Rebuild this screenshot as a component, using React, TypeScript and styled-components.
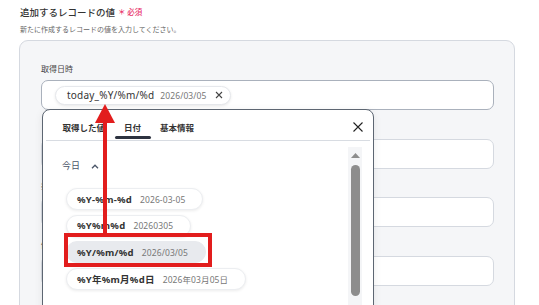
import styled, { createGlobalStyle } from "styled-components";

const GlobalStyle = createGlobalStyle`
  html, body {
    margin: 0;
    padding: 0;
    background: #ffffff;
    overflow: hidden;
  }
  body {
    font-family: "Noto Sans", "Noto Sans CJK JP", sans-serif;
    color: #333;
  }
`;

const Page = styled.div`
  position: relative;
  width: 539px;
  height: 305px;
  box-sizing: border-box;
  padding: 5px 24px 0 19px;
  overflow: hidden;
`;

const Title = styled.div`
  margin-left: 1px;
  display: flex;
  align-items: center;
  gap: 3px;
  font-family: "Noto Sans CJK JP", sans-serif;
  font-size: 9.5px;
  line-height: 14px;
  font-weight: 500;
  color: #333;
`;

const Required = styled.span`
  color: #e8336b;
  font-size: 7.5px;
  font-weight: 500;
`;

const Hint = styled.div`
  margin: 5px 0 6px 1px;
  font-family: "Noto Sans CJK JP", sans-serif;
  font-size: 7px;
  line-height: 10px;
  color: #666;
`;

const Panel = styled.div`
  width: 496px;
  box-sizing: border-box;
  height: 300px;
  padding: 22px 20px 0 21px;
  background: #f5f6f8;
  border: 1px solid #d5d9e0;
  border-radius: 9px;
  display: flex;
  flex-direction: column;
  gap: 11.5px;
`;

const Field = styled.div`
  display: flex;
  flex-direction: column;
  gap: 5px;
`;

const Label = styled.div`
  font-family: "Noto Sans CJK JP", sans-serif;
  font-size: 8px;
  line-height: 12px;
  color: #444;
`;

const InputBox = styled.div<{ $focused?: boolean }>`
  position: relative;
  height: 30px;
  box-sizing: border-box;
  background: #fff;
  border: 1px solid ${({ $focused }) => ($focused ? "#aab1bc" : "#d5d9e0")};
  border-radius: 7px;
  display: flex;
  align-items: center;
  padding-left: 13px;
  z-index: ${({ $focused }) => ($focused ? 2 : 1)};
`;

const Tag = styled.div`
  height: 19px;
  box-sizing: border-box;
  display: flex;
  align-items: center;
  gap: 6px;
  padding: 0 7px 0 11px;
  background: #fff;
  border: 1px solid #e6e8ec;
  border-radius: 10px;
  box-shadow: 0 1px 3px rgba(0, 0, 0, 0.09);
`;

const TagText = styled.span`
  font-size: 10px;
  letter-spacing: 0.2px;
  color: #333;
`;

const SubText = styled.span`
  font-size: 8.5px;
  letter-spacing: 0.1px;
  color: #777;
  font-family: "Noto Sans", "Noto Sans CJK JP", sans-serif;
`;

const Dropdown = styled.div`
  position: absolute;
  top: 100%;
  left: 0;
  width: 332px;
  height: 210px;
  box-sizing: border-box;
  background: #fff;
  border: 1px solid #5d6672;
  border-radius: 8px 8px 0 0;
  box-shadow: 0 2px 8px rgba(0, 0, 0, 0.08);
  display: flex;
  flex-direction: column;
`;

const TabBar = styled.div`
  height: 30px;
  margin: 0 3px;
  padding-left: 7px;
  border-bottom: 1px solid #d8dce2;
  display: flex;
  align-items: stretch;
`;

const Tab = styled.div<{ $active?: boolean }>`
  position: relative;
  display: flex;
  align-items: center;
  padding: 3px 9.5px 0;
  font-family: "Noto Sans CJK JP", sans-serif;
  font-size: 8.5px;
  font-weight: 700;
  color: #333;
  &::after {
    content: "";
    display: ${({ $active }) => ($active ? "block" : "none")};
    position: absolute;
    left: 0;
    right: 0;
    bottom: 1px;
    height: 3px;
    border-radius: 2px;
    background: #2d3340;
  }
`;

const CloseButton = styled.div`
  margin-left: auto;
  margin-right: 7px;
  padding-top: 3px;
  display: flex;
  align-items: center;
`;

const Body = styled.div`
  flex: 1;
  display: flex;
`;

const List = styled.div`
  flex: 1;
  padding: 19px 0 0 19px;
`;

const SectionHead = styled.div`
  display: flex;
  align-items: center;
  gap: 11px;
  font-family: "Noto Sans CJK JP", sans-serif;
  font-size: 9px;
  line-height: 12px;
  color: #4a5568;
`;

const Options = styled.div`
  margin: 16px 0 0 4px;
  display: flex;
  flex-direction: column;
  align-items: flex-start;
  gap: 4.5px;
`;

const Option = styled.div<{ $active?: boolean }>`
  height: 22px;
  box-sizing: border-box;
  display: flex;
  align-items: center;
  gap: 8px;
  padding: 0 17px 0 10px;
  border-radius: 11px;
  background: ${({ $active }) => ($active ? "#e8eaee" : "#fff")};
  border: 1px solid ${({ $active }) => ($active ? "#e8eaee" : "#eceef1")};
  box-shadow: ${({ $active }) =>
    $active ? "none" : "0 1px 3px rgba(0, 0, 0, 0.08)"};
`;

const Format = styled.span`
  font-family: "Noto Sans", "Noto Sans CJK JP", sans-serif;
  font-size: 9.5px;
  letter-spacing: 0.25px;
  font-weight: 700;
  color: #333;
`;

const ScrollTrack = styled.div`
  width: 14px;
  margin: 6px 11px 0 0;
  background: #f4f5f7;
  display: flex;
  flex-direction: column;
  align-items: center;
  padding-top: 6px;
  gap: 7px;
`;

const ScrollThumb = styled.div`
  width: 9px;
  height: 131px;
  border-radius: 5px;
  background: #8d8d8d;
`;

const Annotation = styled.svg`
  position: absolute;
  left: 0;
  top: 0;
  pointer-events: none;
  z-index: 10;
`;

const options = [
  { format: "%Y-%m-%d", sample: "2026-03-05" },
  { format: "%Y%m%d", sample: "20260305" },
  { format: "%Y/%m/%d", sample: "2026/03/05", active: true },
  { format: "%Y年%m月%d日", sample: "2026年03月05日" },
];

const otherFields = ["レコードID", "担当者", "備考"];

export default function App() {
  return (
    <>
      <GlobalStyle />
      <Page>
        <Title>
          追加するレコードの値
          <Required>＊ 必須</Required>
        </Title>
        <Hint>新たに作成するレコードの値を入力してください。</Hint>
        <Panel>
          <Field>
            <Label>取得日時</Label>
            <InputBox $focused>
              <Tag>
                <TagText>today_%Y/%m/%d</TagText>
                <SubText>2026/03/05</SubText>
                <svg width="8" height="8" viewBox="0 0 8 8" style={{ marginLeft: 2 }}>
                  <path d="M1 1L7 7M7 1L1 7" stroke="#444" strokeWidth="1.1" />
                </svg>
              </Tag>
              <Dropdown>
                <TabBar>
                  <Tab>取得した値</Tab>
                  <Tab $active>日付</Tab>
                  <Tab>基本情報</Tab>
                  <CloseButton>
                    <svg width="10" height="10" viewBox="0 0 10 10">
                      <path d="M0.5 0.5L9.5 9.5M9.5 0.5L0.5 9.5" stroke="#222" strokeWidth="1.1" />
                    </svg>
                  </CloseButton>
                </TabBar>
                <Body>
                  <List>
                    <SectionHead>
                      今日
                      <svg width="8" height="5" viewBox="0 0 8 5">
                        <path d="M1 4.2L4 1.2L7 4.2" fill="none" stroke="#4a5568" strokeWidth="1.3" />
                      </svg>
                    </SectionHead>
                    <Options>
                      {options.map((o) => (
                        <Option key={o.format} $active={o.active}>
                          <Format>{o.format}</Format>
                          <SubText>{o.sample}</SubText>
                        </Option>
                      ))}
                    </Options>
                  </List>
                  <ScrollTrack>
                    <svg width="9" height="5" viewBox="0 0 9 5">
                      <path d="M4.5 0L9 5H0Z" fill="#8d8d8d" />
                    </svg>
                    <ScrollThumb />
                  </ScrollTrack>
                </Body>
              </Dropdown>
            </InputBox>
          </Field>
          {otherFields.map((name) => (
            <Field key={name}>
              <Label>{name}</Label>
              <InputBox />
            </Field>
          ))}
        </Panel>
        <Annotation width="539" height="305" viewBox="0 0 539 305">
          <rect x="66" y="235" width="144" height="30" fill="none" stroke="#e21d1d" strokeWidth="4" />
          <rect x="103" y="121" width="4" height="114" fill="#e21d1d" />
          <path d="M105 104L115 123H95Z" fill="#e21d1d" />
        </Annotation>
      </Page>
    </>
  );
}
